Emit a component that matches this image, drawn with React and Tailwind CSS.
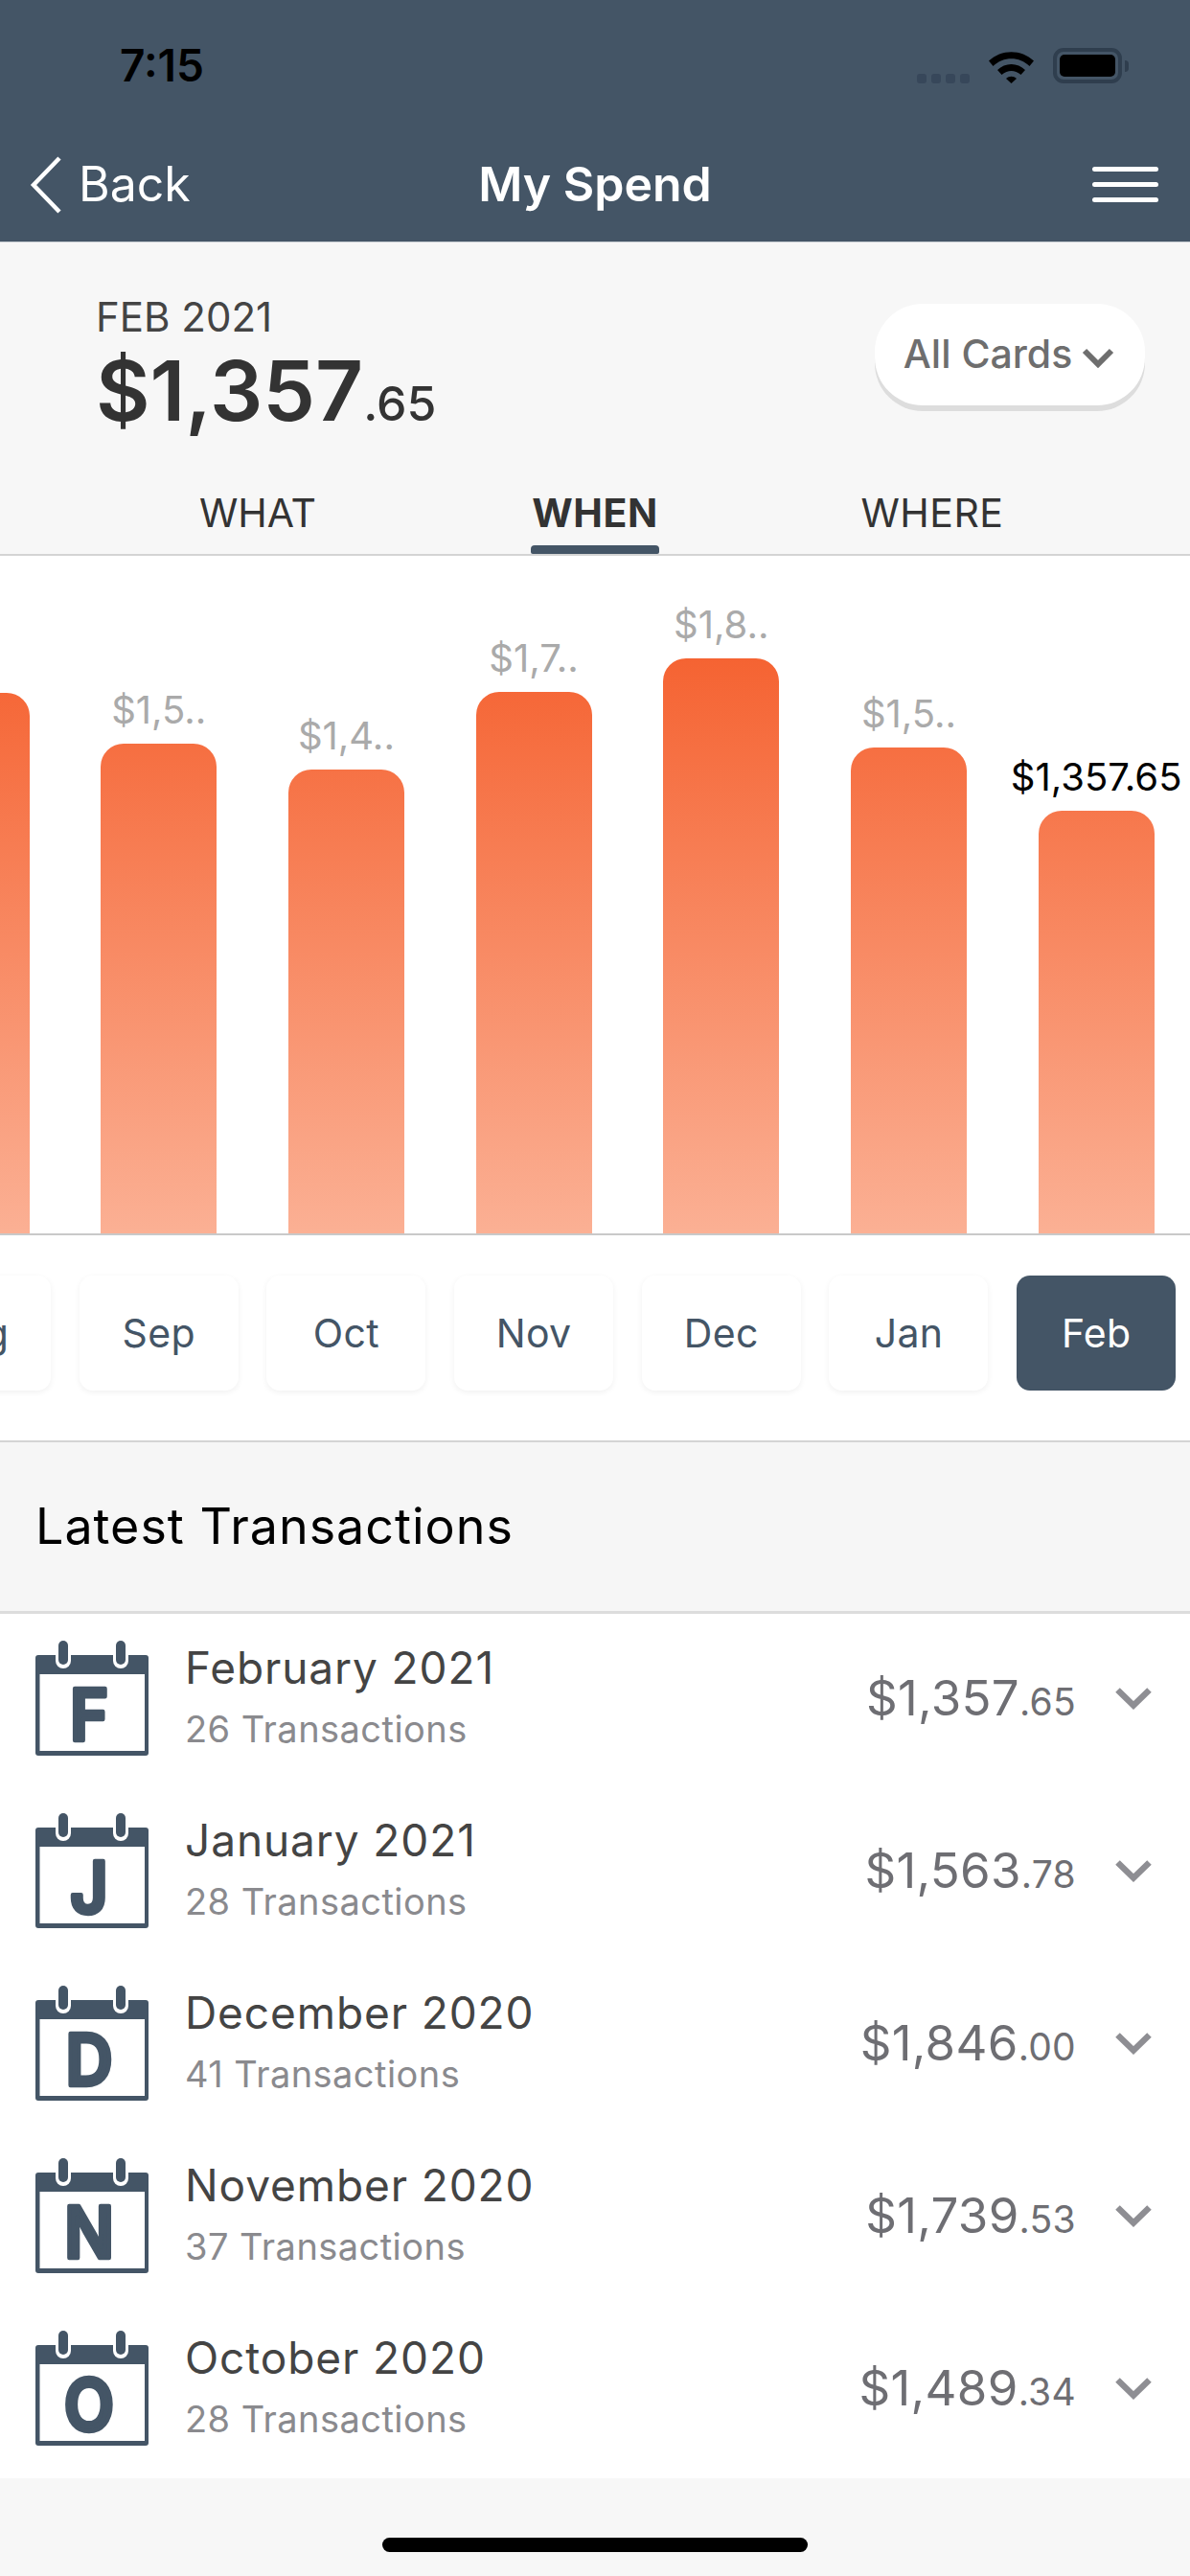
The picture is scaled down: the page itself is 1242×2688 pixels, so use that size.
const bars = [
  { h: 564, label: "" },
  { h: 511, label: "$1,5.." },
  { h: 484, label: "$1,4.." },
  { h: 565, label: "$1,7.." },
  { h: 600, label: "$1,8.." },
  { h: 507, label: "$1,5.." },
  { h: 441, label: "$1,357.65", active: true },
];
const months = ["Aug", "Sep", "Oct", "Nov", "Dec", "Jan", "Feb"];
const rows = [
  { l: "F", t: "February 2021", s: "26 Transactions", a: "$1,357", c: ".65" },
  { l: "J", t: "January 2021", s: "28 Transactions", a: "$1,563", c: ".78" },
  { l: "D", t: "December 2020", s: "41 Transactions", a: "$1,846", c: ".00" },
  { l: "N", t: "November 2020", s: "37 Transactions", a: "$1,739", c: ".53" },
  { l: "O", t: "October 2020", s: "28 Transactions", a: "$1,489", c: ".34" },
];

function Calendar({ letter }) {
  return (
    <svg width="119" height="120" viewBox="0 0 119 120" className="shrink-0">
      <path d="M3 15h112a3 3 0 0 1 3 3v99a3 3 0 0 1-3 3H3a3 3 0 0 1-3-3V18a3 3 0 0 1 3-3z" fill="#445566" />
      <rect x="4.500" y="35" width="109.500" height="80" fill="#fff" />
      <rect x="21" y="0" width="16" height="29" rx="8" fill="#fff" />
      <rect x="81" y="0" width="16" height="29" rx="8" fill="#fff" />
      <rect x="24" y="0" width="10" height="25" rx="5" fill="#445566" />
      <rect x="84" y="0" width="10" height="25" rx="5" fill="#445566" />
      <text transform="translate(56 103.500) scale(0.92 1)" textAnchor="middle" fontFamily="Inter, sans-serif" fontWeight="600" fontSize="74" fill="#445566" stroke="#445566" strokeWidth="4.500" strokeLinejoin="round">{letter}</text>
    </svg>
  );
}

export default function App() {
  return (
    <div className="w-[1242px] h-[2688px] overflow-hidden bg-[#f7f7f7] font-['Inter','Liberation_Sans',sans-serif] flex flex-col">
      <header className="h-[253px] shrink-0 bg-[#445566] border-b border-[#c9ced3] flex flex-col">
        <div className="h-[136px] shrink-0 flex items-center justify-between pl-[125px] pr-[64px]">
          <span className="text-[46px] font-semibold text-black">7:15</span>
          <div className="flex items-end h-[37px]">
            <div className="flex gap-[5px] mr-[20px]">
              {[0, 1, 2, 3].map((i) => (
                <span key={i} className="w-[10px] h-[10px] rounded-[3px] bg-[#37475a]" />
              ))}
            </div>
            <svg width="47" height="36" viewBox="0 0 47 36" className="mr-[20px]">
              <path d="M0 12.500C13 0 34 0 47 12.500L42.500 18C32 7.500 15 7.500 4.500 18z" fill="#000" />
              <path d="M9 22C17 14 30 14 38 22L33.500 27C27 21.500 20 21.500 13.500 27z" fill="#000" />
              <path d="M18 31c3.500-3 7.500-3 11 0L23.500 36z" fill="#000" />
            </svg>
            <div className="w-[72px] h-[37px] rounded-[11px] border-[4px] border-[#2f3e4e] p-[3px] box-border">
              <div className="w-full h-full rounded-[5px] bg-black" />
            </div>
            <div className="w-[4px] h-[12px] rounded-r-full bg-[#2f3e4e] ml-[3px] mb-[12px]" />
          </div>
        </div>
        <div className="relative flex-1 flex items-center justify-between pl-[30px] pr-[33px] pb-[3px]">
          <div className="flex items-center">
            <svg width="36" height="62" viewBox="0 0 36 62" className="mr-[16px]">
              <path d="M32 3 5 31l27 28" fill="none" stroke="#fff" strokeWidth="4.500" />
            </svg>
            <span className="text-[50px] text-white">Back</span>
          </div>
          <span className="absolute inset-0 flex items-center justify-center pb-[3px] text-[50px] font-semibold text-white">My Spend</span>
          <div className="flex flex-col gap-[11px]">
            {[0, 1, 2].map((i) => (
              <span key={i} className="block w-[69px] h-[5px] rounded-full bg-white" />
            ))}
          </div>
        </div>
      </header>

      <section className="h-[327px] shrink-0 border-b-2 border-[#d4d4d4] flex flex-col justify-between">
        <div className="flex justify-between pl-[100px] pr-[47px] pt-[54px]">
          <div>
            <div className="text-[42px] leading-[48px] text-[#444]">FEB 2021</div>
            <div className="leading-[106px] font-semibold text-[#333]">
              <span className="text-[87px]">$1,357</span>
              <span className="text-[50px] font-medium">.65</span>
            </div>
          </div>
          <button className="mt-[10px] w-[282px] h-[106px] rounded-[50px] bg-white shadow-[0_6px_0_#dddddd] flex items-center justify-center pr-[2px] text-[#6e6e6e] text-[41px] font-medium">
            All Cards
            <svg width="34" height="22" viewBox="0 0 34 22" className="ml-[10px] mt-[6px]">
              <path d="M3 4l14 14L31 4" fill="none" stroke="#6e6e6e" strokeWidth="6" />
            </svg>
          </button>
        </div>
        <div className="flex justify-center h-[65px]">
          <div className="w-[352px] text-center text-[41px] text-[#333] leading-[44px]">WHAT</div>
          <div className="relative w-[352px] text-center text-[41px] font-bold tracking-[0.5px] text-[#333] leading-[44px]">
            WHEN
            <span className="absolute left-[109px] bottom-0 w-[134px] h-[9px] rounded-t-[4px] rounded-b-[2px] bg-[#445566]" />
          </div>
          <div className="w-[352px] text-center text-[41px] tracking-[0.5px] text-[#333] leading-[44px]">WHERE</div>
        </div>
      </section>

      <section className="h-[925px] shrink-0 bg-white border-b-2 border-[#d4d4d4] flex flex-col">
        <div className="h-[709px] shrink-0 border-b-2 border-[#c9c9c9] flex justify-end items-end overflow-hidden">
          {bars.map((b, i) => (
            <div key={i} className="w-[195.700px] shrink-0 flex flex-col items-center">
              <span className={b.active ? "text-[40px] leading-[44px] mb-[13px] whitespace-nowrap text-black" : "text-[40px] leading-[44px] mb-[13px] whitespace-nowrap text-[#aaaaaa]"}>
                {b.label}
              </span>
              <div
                className="w-[121px] rounded-t-[24px] bg-linear-to-b/srgb from-[#f56332] to-[#fbb094] bg-[length:100%_601px] bg-bottom bg-no-repeat"
                style={{ height: b.h }}
              />
            </div>
          ))}
        </div>
        <div className="flex justify-end items-start pt-[42px] overflow-hidden">
          {months.map((m) => (
            <div key={m} className="w-[195.700px] shrink-0 flex justify-center pb-[6px]">
              <div className={m === "Feb" ? "w-[166px] h-[120px] rounded-[14px] flex items-center justify-center pt-[2px] text-[41px] tracking-[0.3px] bg-[#445566] text-white" : "w-[166px] h-[120px] rounded-[14px] flex items-center justify-center pt-[2px] text-[41px] tracking-[0.3px] bg-white text-[#445566] shadow-[0_2px_6px_rgba(0,0,0,0.06)]"}>
                {m}
              </div>
            </div>
          ))}
        </div>
      </section>

      <div className="h-[179px] shrink-0 bg-[#f6f6f6] border-b-[3px] border-[#dcdcdc] flex items-center pl-[37px] text-[52px] tracking-[1px] text-black">
        Latest Transactions
      </div>

      <div className="bg-white pb-[2px]">
        {rows.map((r) => (
          <div key={r.l} className="h-[180px] pb-[4px] flex items-center pl-[37px] pr-[40px]">
            <Calendar letter={r.l} />
            <div className="ml-[37px] flex-1">
              <div className="text-[46px] tracking-[0.9px] leading-[64px] text-[#444]">{r.t}</div>
              <div className="text-[38px] tracking-[0.45px] leading-[64px] text-[#8a8a8e]">{r.s}</div>
            </div>
            <div className="text-[#6e6e73] mr-[41px] whitespace-nowrap tracking-[0.3px]">
              <span className="text-[51px]">{r.a}</span>
              <span className="text-[39px]">{r.c}</span>
            </div>
            <svg width="38" height="24" viewBox="0 0 38 24">
              <path d="M2.500 3.500 19 19.500 35.500 3.500" fill="none" stroke="#8e8e93" strokeWidth="6.500" />
            </svg>
          </div>
        ))}
      </div>

      <div className="flex-1 flex justify-center pt-[62px]">
        <div className="w-[444px] h-[15px] rounded-full bg-black" />
      </div>
    </div>
  );
}
